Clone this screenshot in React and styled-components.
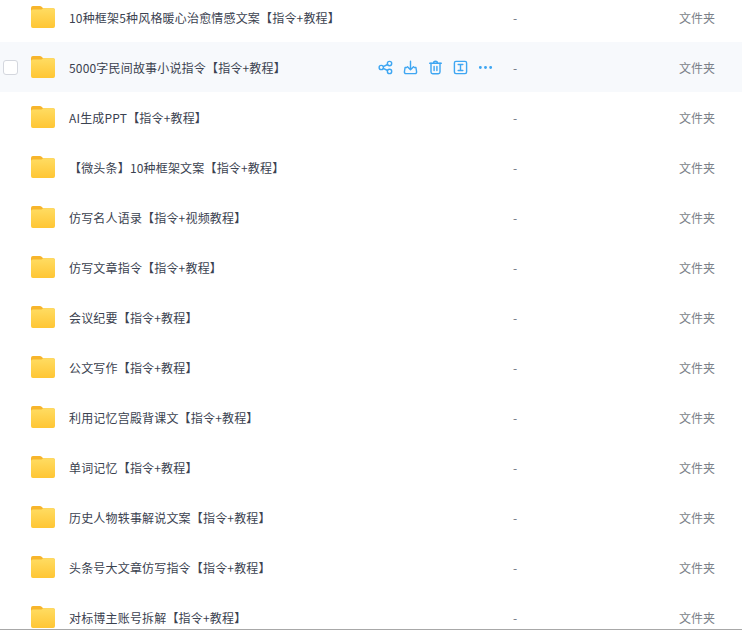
import styled, { createGlobalStyle } from "styled-components";

const GlobalStyle = createGlobalStyle`
  html, body {
    margin: 0;
    padding: 0;
    background: #fff;
    overflow: hidden;
  }
`;

const files = [
  "10种框架5种风格暖心治愈情感文案【指令+教程】",
  "5000字民间故事小说指令【指令+教程】",
  "AI生成PPT【指令+教程】",
  "【微头条】10种框架文案【指令+教程】",
  "仿写名人语录【指令+视频教程】",
  "仿写文章指令【指令+教程】",
  "会议纪要【指令+教程】",
  "公文写作【指令+教程】",
  "利用记忆宫殿背课文【指令+教程】",
  "单词记忆【指令+教程】",
  "历史人物轶事解说文案【指令+教程】",
  "头条号大文章仿写指令【指令+教程】",
  "对标博主账号拆解【指令+教程】",
];

const Page = styled.div`
  width: 742px;
  height: 630px;
  box-sizing: border-box;
  overflow: hidden;
  border-bottom: 1px solid #a8a8a8;
  font-family: "Noto Sans CJK SC", "Liberation Sans", sans-serif;
`;

const List = styled.div`
  margin-top: -8px;
`;

const Row = styled.div`
  height: 50px;
  display: grid;
  grid-template-columns: 31px 38px 300px 126px 184px 1fr;
  align-items: center;
  background: ${(p) => (p.$active ? "#f7f9fc" : "#fff")};
`;

const Check = styled.span`
  width: 13px;
  height: 13px;
  margin-left: 3px;
  border: 1px solid #d4d7de;
  border-radius: 3px;
  background: #fff;
`;

const Name = styled.div`
  font-size: 12px;
  letter-spacing: 0.18px;
  color: #3b4250;
  white-space: nowrap;
`;

const Actions = styled.div`
  display: flex;
  justify-content: flex-end;
  align-items: center;
  gap: 10px;
  padding-right: 2px;
  color: #3ea6f2;
`;

const Size = styled.div`
  font-size: 12px;
  color: #6b7280;
  padding-left: 18px;
`;

const Kind = styled.div`
  font-size: 12px;
  color: #7a7f88;
`;

const Folder = () => (
  <svg width="24" height="22" viewBox="0 0 26 22" preserveAspectRatio="none">
    <defs>
      <linearGradient id="folderFront" x1="0" y1="0" x2="0" y2="1">
        <stop offset="0" stopColor="#ffdc62" />
        <stop offset="1" stopColor="#ffc634" />
      </linearGradient>
    </defs>
    <path d="M2 0h7.500c1 0 1.600.4 2.300 1l1.400 1.300h10.800a2 2 0 0 1 2 2V8H0V2a2 2 0 0 1 2-2z" fill="#f7b52c" />
    <path d="M2 3.500h8.500c1 0 1.700-.5 2.400-1l.4-.2H24a2 2 0 0 1 2 2V20a2 2 0 0 1-2 2H2a2 2 0 0 1-2-2V5.500a2 2 0 0 1 2-2z" fill="url(#folderFront)" />
  </svg>
);

const Icon = ({ children }) => (
  <svg width="15" height="15" viewBox="0 0 16 16" fill="none" stroke="currentColor" strokeWidth="1.500" strokeLinecap="round" strokeLinejoin="round">
    {children}
  </svg>
);

const RowActions = () => (
  <Actions>
    <Icon>
      <circle cx="3.500" cy="8" r="2.300" />
      <circle cx="12.300" cy="3.800" r="2.300" />
      <circle cx="12.300" cy="12.200" r="2.300" />
      <path d="M5.600 7l4.600-2.200M5.600 9l4.600 2.200" />
    </Icon>
    <Icon>
      <path d="M8 1.200v9M4.800 7.200L8 10.400l3.200-3.200" />
      <path d="M4 8H2.200l-.7 4.600c-.1.900.5 1.900 1.500 1.900h10c1 0 1.600-1 1.500-1.900L13.800 8H12" />
    </Icon>
    <Icon>
      <path d="M1.800 3.500h12.400M5.800 3.300c0-1.300.8-2 2.200-2s2.200.7 2.200 2" />
      <path d="M3.200 3.500v9.300c0 1.100.7 1.900 1.800 1.900h6c1.100 0 1.800-.8 1.800-1.900V3.500" />
      <path d="M6.500 6.800v4.400M9.500 6.800v4.400" />
    </Icon>
    <Icon>
      <rect x="1.500" y="1.500" width="13" height="13" rx="1.600" />
      <path d="M5.500 4.800h5M5.500 11.200h5M8 4.800v6.400" />
    </Icon>
    <Icon>
      <circle cx="2.500" cy="8" r="0.800" fill="currentColor" />
      <circle cx="8" cy="8" r="0.800" fill="currentColor" />
      <circle cx="13.500" cy="8" r="0.800" fill="currentColor" />
    </Icon>
  </Actions>
);

export default function App() {
  return (
    <Page>
      <GlobalStyle />
      <List>
        {files.map((name, i) => (
          <Row key={name} $active={i === 1}>
            {i === 1 ? <Check /> : <span />}
            <Folder />
            <Name>{name}</Name>
            {i === 1 ? <RowActions /> : <span />}
            <Size>-</Size>
            <Kind>文件夹</Kind>
          </Row>
        ))}
      </List>
    </Page>
  );
}
